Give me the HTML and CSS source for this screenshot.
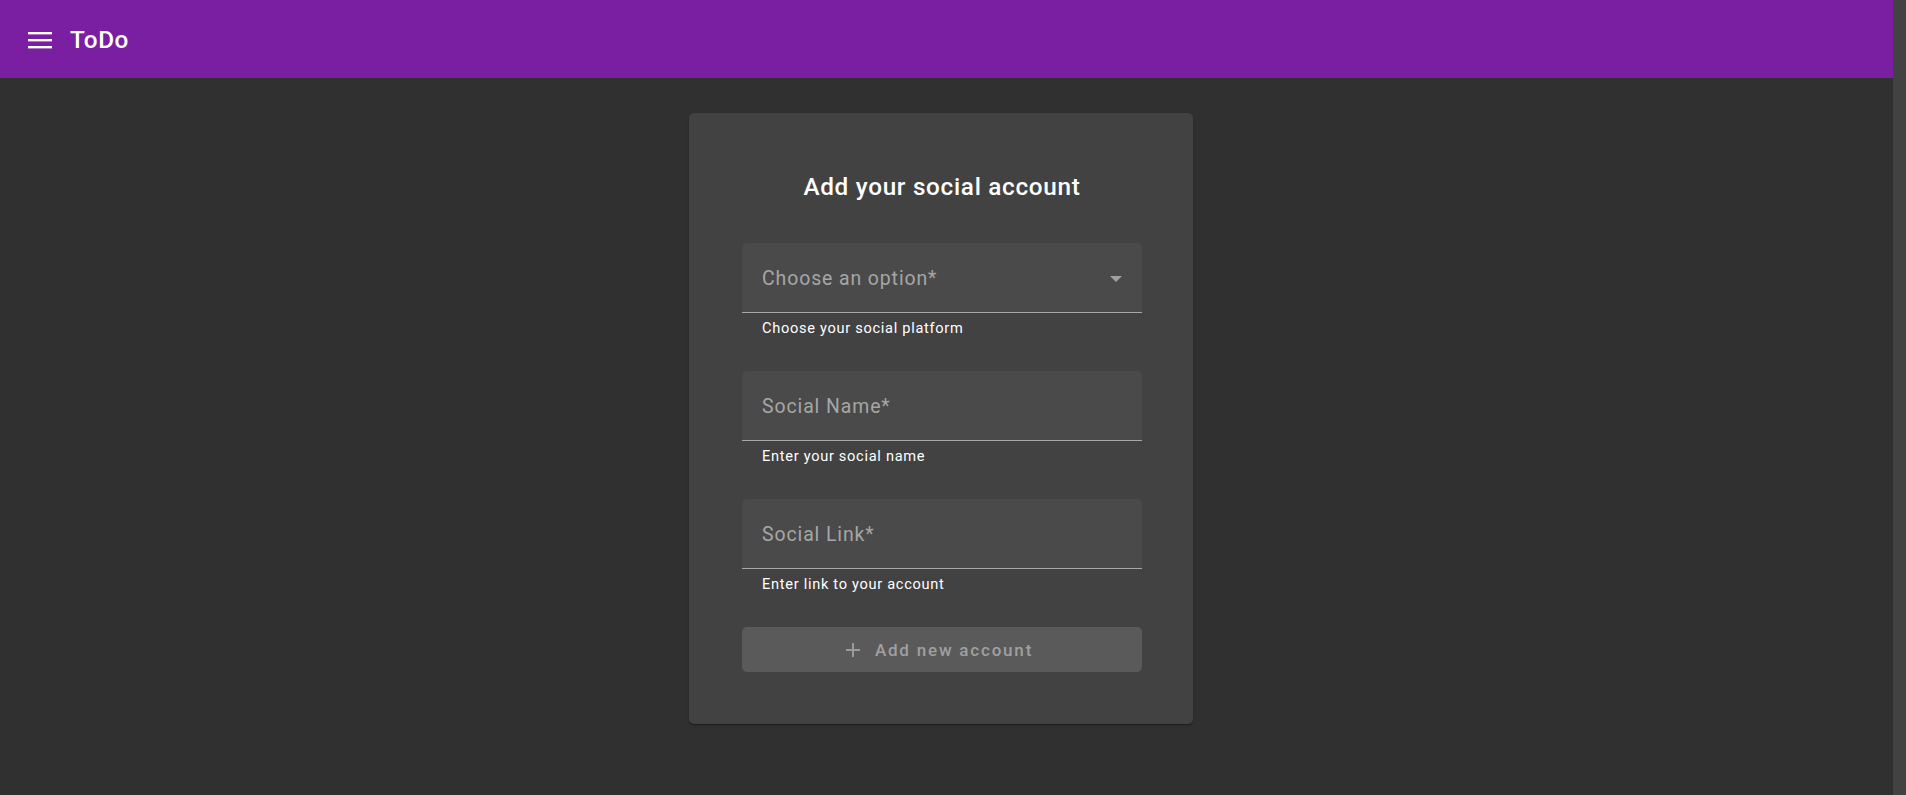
FILE: index.html
```html
<!DOCTYPE html>
<html lang="en">
<head>
<meta charset="utf-8">
<title>ToDo</title>
<link rel="stylesheet" href="styles.css">
</head>
<body>
<div class="shell">
  <div class="page">
    <header class="toolbar">
      <button class="menu-btn" aria-label="Menu">
        <svg width="24" height="18" viewBox="0 0 24 18" aria-hidden="true">
          <rect x="0" y="1" width="24" height="2.4" fill="#fff"/>
          <rect x="0" y="8" width="24" height="2.4" fill="#fff"/>
          <rect x="0" y="15" width="24" height="2.4" fill="#fff"/>
        </svg>
      </button>
      <span class="brand">ToDo</span>
    </header>
    <main class="content">
      <section class="card">
        <h1 class="card-title">Add your social account</h1>
        <div class="field-group">
          <div class="field">
            <span class="field-label">Choose an option*</span>
            <span class="select-arrow"></span>
          </div>
          <div class="hint">Choose your social platform</div>
        </div>
        <div class="field-group">
          <div class="field">
            <span class="field-label">Social Name*</span>
          </div>
          <div class="hint">Enter your social name</div>
        </div>
        <div class="field-group">
          <div class="field">
            <span class="field-label">Social Link*</span>
          </div>
          <div class="hint">Enter link to your account</div>
        </div>
        <button class="add-btn" disabled>
          <svg width="24" height="24" viewBox="0 0 24 24" aria-hidden="true">
            <path d="M19 13h-6v6h-2v-6H5v-2h6V5h2v6h6v2z" fill="#9a9a9a"/>
          </svg>
          <span>Add new account</span>
        </button>
      </section>
    </main>
  </div>
  <div class="scroll-track"></div>
</div>
</body>
</html>
```

FILE: styles.css
```css
html, body {
  margin: 0;
  padding: 0;
  height: 100%;
  background: #303030;
  font-family: Roboto, "Noto Sans", "Liberation Sans", sans-serif;
  color: #fff;
  overflow: hidden;
}

.shell {
  display: flex;
  height: 795px;
}

.page {
  flex: 1;
  display: flex;
  flex-direction: column;
  min-width: 0;
}

.scroll-track {
  width: 13px;
  flex: 0 0 13px;
  background: #424242;
}

.toolbar {
  height: 78px;
  flex: 0 0 78px;
  background: #7b1fa2;
  display: flex;
  align-items: center;
  padding-left: 28px;
  box-sizing: border-box;
}

.menu-btn {
  background: none;
  border: 0;
  padding: 0;
  width: 24px;
  height: 18px;
  margin-top: 1px;
  display: flex;
  cursor: pointer;
}

.brand {
  margin-left: 18px;
  font-size: 24.3px;
  font-weight: 500;
  color: #fff;
  letter-spacing: 0.6px;
}

.content {
  display: flex;
  justify-content: center;
  align-items: flex-start;
  padding-top: 35px;
  padding-right: 11px;
}

.card {
  width: 504px;
  box-sizing: border-box;
  background: #424242;
  border-radius: 5px;
  padding: 58px 51px 52px 53px;
  box-shadow: 0 2px 1px -1px rgba(0,0,0,.2), 0 1px 1px 0 rgba(0,0,0,.14), 0 1px 3px 0 rgba(0,0,0,.12);
}

.card-title {
  margin: 0 0 40px;
  font-size: 24.3px;
  line-height: 32px;
  font-weight: 500;
  letter-spacing: 0.7px;
  text-align: center;
  color: #fff;
}

.field-group {
  margin-bottom: 34px;
}

.field {
  height: 69px;
  background: #4a4a4a;
  border-radius: 5px 5px 0 0;
  border-bottom: 1px solid #a8a8a8;
  display: flex;
  align-items: center;
  justify-content: space-between;
  padding: 0 20px;
}

.field-label {
  font-size: 19.45px;
  letter-spacing: 0.9px;
  color: #a6a6a6;
  padding-top: 1px;
}

.select-arrow {
  width: 0;
  height: 0;
  border-left: 6px solid transparent;
  border-right: 6px solid transparent;
  border-top: 6px solid #a0a0a0;
  margin-top: 2px;
}

.hint {
  margin-top: 6px;
  padding-left: 20px;
  font-size: 14.6px;
  line-height: 18px;
  letter-spacing: 0.7px;
  color: #fff;
}

.add-btn {
  width: 100%;
  height: 45px;
  border: 0;
  border-radius: 5px;
  background: #5a5a5a;
  color: #a0a0a0;
  display: flex;
  align-items: center;
  justify-content: center;
  gap: 10px;
  font-family: Roboto, "Noto Sans", "Liberation Sans", sans-serif;
  font-size: 17px;
  font-weight: 500;
  letter-spacing: 1.8px;
  padding: 0 10px 0 0;
  cursor: default;
}

.add-btn svg {
  display: block;
}
```
